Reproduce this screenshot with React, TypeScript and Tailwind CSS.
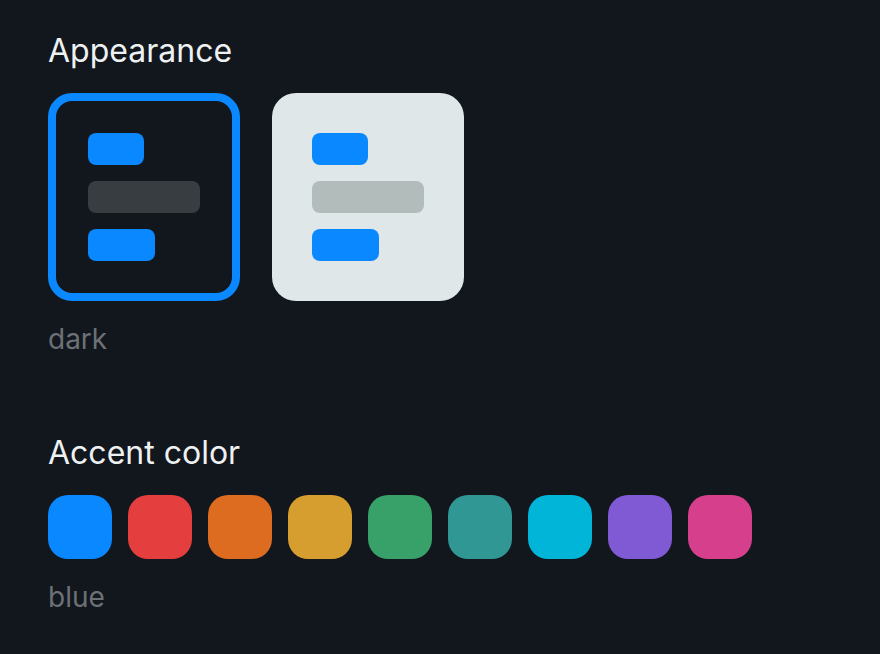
import React from "react";

const swatches = [
  { name: "blue", color: "bg-[#0a88ff]" },
  { name: "red", color: "bg-[#e53e3e]" },
  { name: "orange", color: "bg-[#dd6b20]" },
  { name: "yellow", color: "bg-[#d69e2e]" },
  { name: "green", color: "bg-[#38a169]" },
  { name: "teal", color: "bg-[#319795]" },
  { name: "cyan", color: "bg-[#00b5d8]" },
  { name: "purple", color: "bg-[#805ad5]" },
  { name: "pink", color: "bg-[#d53f8c]" },
];

function ThemeCard({ dark }: { dark: boolean }) {
  return (
    <div
      className={
        dark
          ? "w-[192px] h-[208px] rounded-[24px] border-[8px] border-[#0a88ff] bg-[#12161d] p-8 flex flex-col gap-4"
          : "w-[192px] h-[208px] rounded-[24px] border-[8px] border-transparent bg-[#dfe7e8] p-8 flex flex-col gap-4"
      }
    >
      <div className="w-[56px] h-8 rounded-[8px] bg-[#0a88ff]" />
      <div
        className={
          dark
            ? "w-[112px] h-8 rounded-[8px] bg-[#383d42]"
            : "w-[112px] h-8 rounded-[8px] bg-[#b1bcbb]"
        }
      />
      <div className="w-[67px] h-8 rounded-[8px] bg-[#0a88ff]" />
    </div>
  );
}

export default function App() {
  return (
    <div
      className="w-[880px] h-[654px] bg-[#12161d] px-12 pt-[31px] flex flex-col"
      style={{ fontFamily: "Inter, 'Noto Sans', sans-serif" }}
    >
      <h2 className="text-[32px] leading-[40px] text-[#eef1f2] font-normal">Appearance</h2>
      <div className="mt-[22px] flex gap-8">
        <ThemeCard dark />
        <ThemeCard dark={false} />
      </div>
      <div className="mt-[20px] text-[28px] leading-[36px] text-[#6c7176]">dark</div>

      <h2 className="mt-[76px] text-[32px] leading-[40px] text-[#eef1f2] font-normal">Accent color</h2>
      <div className="mt-[22px] flex gap-4">
        {swatches.map((s) => (
          <div key={s.name} className={`w-16 h-16 rounded-[20px] ${s.color}`} />
        ))}
      </div>
      <div className="mt-[20px] text-[28px] leading-[36px] text-[#6c7176]">blue</div>
    </div>
  );
}
